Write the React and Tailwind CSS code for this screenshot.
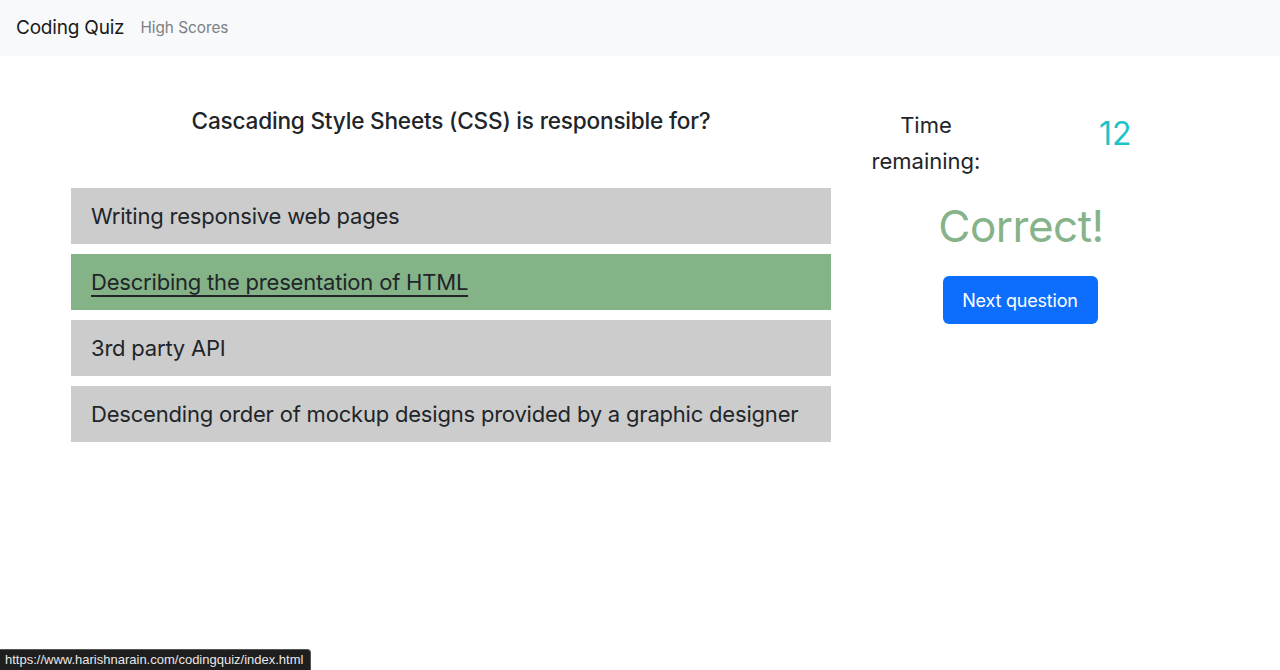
const ANSWERS = [
  { text: 'Writing responsive web pages', correct: false },
  { text: 'Describing the presentation of HTML', correct: true },
  { text: '3rd party API', correct: false },
  { text: 'Descending order of mockup designs provided by a graphic designer', correct: false },
]

export default function App() {
  return (
    <div className="min-h-[670px] bg-white text-[#212529] relative" style={{ fontFamily: 'Inter, "Noto Sans", sans-serif' }}>
      <nav className="h-14 bg-[#f8f9fa] flex items-center px-4">
        <span className="text-[19px] text-[#1a1a1a] mr-4 tracking-[-0.2px]">Coding Quiz</span>
        <span className="text-[15.3px] text-[#7b7f83]">High Scores</span>
      </nav>

      <div className="flex pl-[71px] pt-[50px]">
        <div className="w-[760px]">
          <h5 className="text-[22.6px] font-medium text-center h-[82px] leading-[30px] tracking-[-0.2px]">
            Cascading Style Sheets (CSS) is responsible for?
          </h5>
          <div className="flex flex-col gap-[10px]">
            {ANSWERS.map(a => (
              <div
                key={a.text}
                className={"h-14 flex items-center pl-5 text-[22px] tracking-[-0.2px] " + (a.correct ? 'bg-[#85b388] underline underline-offset-[5px] decoration-[1.5px]' : 'bg-[#cccccc]')}
              >
                {a.text}
              </div>
            ))}
          </div>
        </div>

        <div className="w-[380px] flex flex-col items-center">
          <div className="w-full flex pt-[1px]">
            <div className="w-[190px] text-center text-[22px] leading-[36px]">
              Time<br />remaining:
            </div>
            <div className="flex-1 pl-[78px] text-[32px] text-[#1ec3c8] leading-[44px] pt-[5px]">12</div>
          </div>
          <div className="text-[44px] text-[#86b38a] leading-[58px] mt-[18px] tracking-[-0.5px]">Correct!</div>
          <button className="mt-[21px] w-[155px] h-12 rounded-md bg-[#0d6efd] text-white text-[18px] tracking-[-0.2px] -translate-x-px">
            Next question
          </button>
        </div>
      </div>

      <div className="absolute left-0 bottom-0 h-[21px] w-[311px] bg-[#1e1e1e] rounded-tr-[4px] text-[13px] text-[#e8e8e8] flex items-center pl-[5px] border-t border-r border-[#555]" style={{ fontFamily: '"Liberation Sans", Arial, sans-serif' }}>
        https://www.harishnarain.com/codingquiz/index.html
      </div>
    </div>
  )
}
